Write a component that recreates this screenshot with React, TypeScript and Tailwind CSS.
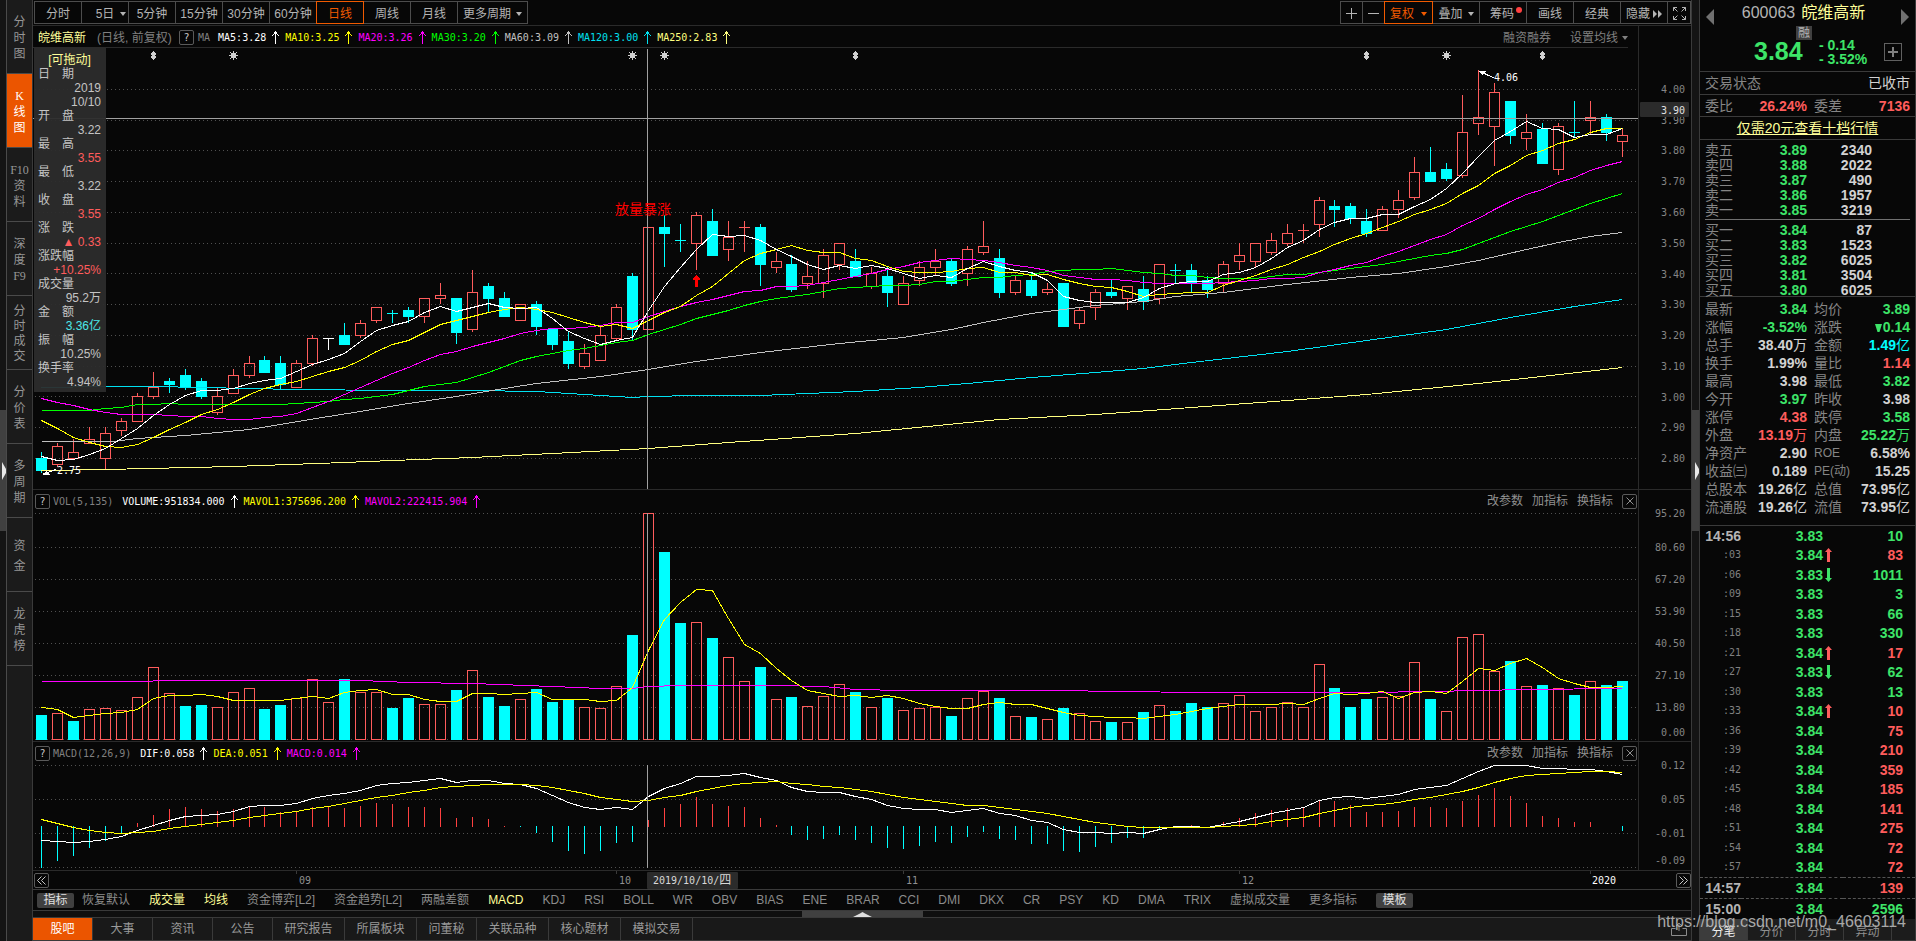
import React, { useEffect, useRef, useState } from "react";

/* ------------------------------------------------------------------ data */

type Kind = "up" | "down" | "flat";
/* [high, body top, body bottom, low, kind] */
type Candle = [number, number, number, number, Kind];

const CANDLES: Candle[] = [
  [2.82, 2.8, 2.76, 2.75, "down"],
  [2.85, 2.84, 2.78, 2.77, "up"],
  [2.86, 2.82, 2.8, 2.8, "up"],
  [2.9, 2.86, 2.85, 2.85, "up"],
  [2.9, 2.88, 2.8, 2.76, "up"],
  [2.93, 2.92, 2.89, 2.87, "up"],
  [3.01, 3.0, 2.92, 2.92, "up"],
  [3.08, 3.03, 3.0, 2.99, "up"],
  [3.06, 3.05, 3.04, 3.01, "down"],
  [3.09, 3.07, 3.03, 3.02, "down"],
  [3.06, 3.05, 3.0, 2.99, "down"],
  [3.03, 3.0, 2.95, 2.94, "up"],
  [3.09, 3.07, 3.01, 3.01, "up"],
  [3.13, 3.11, 3.07, 3.06, "up"],
  [3.13, 3.12, 3.08, 3.08, "down"],
  [3.13, 3.11, 3.04, 3.02, "down"],
  [3.12, 3.11, 3.03, 3.03, "up"],
  [3.2, 3.19, 3.11, 3.1, "up"],
  [3.19, 3.19, 3.19, 3.15, "flat"],
  [3.24, 3.2, 3.17, 3.17, "down"],
  [3.25, 3.24, 3.2, 3.19, "up"],
  [3.29, 3.29, 3.25, 3.24, "up"],
  [3.28, 3.27, 3.27, 3.24, "down"],
  [3.29, 3.28, 3.26, 3.24, "down"],
  [3.32, 3.32, 3.26, 3.24, "up"],
  [3.37, 3.33, 3.32, 3.3, "up"],
  [3.32, 3.32, 3.21, 3.17, "down"],
  [3.41, 3.34, 3.22, 3.21, "up"],
  [3.37, 3.36, 3.32, 3.27, "down"],
  [3.34, 3.32, 3.26, 3.26, "down"],
  [3.3, 3.3, 3.25, 3.25, "up"],
  [3.31, 3.3, 3.23, 3.2, "down"],
  [3.22, 3.22, 3.17, 3.15, "down"],
  [3.21, 3.18, 3.11, 3.09, "down"],
  [3.17, 3.14, 3.1, 3.09, "up"],
  [3.23, 3.2, 3.12, 3.12, "up"],
  [3.3, 3.29, 3.19, 3.18, "up"],
  [3.4, 3.39, 3.22, 3.18, "down"],
  [3.55, 3.55, 3.22, 3.22, "up"],
  [3.59, 3.55, 3.53, 3.42, "down"],
  [3.56, 3.51, 3.51, 3.47, "down"],
  [3.6, 3.59, 3.5, 3.41, "up"],
  [3.61, 3.57, 3.46, 3.46, "down"],
  [3.57, 3.52, 3.48, 3.44, "up"],
  [3.57, 3.55, 3.55, 3.47, "up"],
  [3.56, 3.55, 3.43, 3.36, "down"],
  [3.47, 3.44, 3.42, 3.4, "up"],
  [3.46, 3.43, 3.35, 3.34, "down"],
  [3.44, 3.39, 3.37, 3.35, "up"],
  [3.48, 3.46, 3.37, 3.32, "up"],
  [3.5, 3.5, 3.43, 3.41, "up"],
  [3.48, 3.44, 3.39, 3.39, "down"],
  [3.42, 3.4, 3.36, 3.35, "up"],
  [3.42, 3.39, 3.34, 3.29, "down"],
  [3.39, 3.37, 3.3, 3.3, "up"],
  [3.44, 3.42, 3.38, 3.36, "up"],
  [3.48, 3.44, 3.42, 3.39, "up"],
  [3.45, 3.44, 3.37, 3.36, "down"],
  [3.49, 3.48, 3.4, 3.36, "up"],
  [3.57, 3.49, 3.47, 3.46, "up"],
  [3.48, 3.45, 3.34, 3.32, "down"],
  [3.39, 3.38, 3.34, 3.33, "up"],
  [3.4, 3.38, 3.33, 3.32, "down"],
  [3.37, 3.35, 3.34, 3.33, "up"],
  [3.37, 3.37, 3.23, 3.23, "down"],
  [3.29, 3.28, 3.24, 3.22, "up"],
  [3.35, 3.34, 3.29, 3.25, "up"],
  [3.38, 3.34, 3.33, 3.32, "down"],
  [3.36, 3.36, 3.32, 3.28, "up"],
  [3.39, 3.35, 3.31, 3.28, "down"],
  [3.43, 3.43, 3.32, 3.3, "up"],
  [3.43, 3.41, 3.41, 3.37, "down"],
  [3.43, 3.41, 3.37, 3.34, "down"],
  [3.39, 3.38, 3.35, 3.32, "down"],
  [3.44, 3.43, 3.37, 3.34, "up"],
  [3.5, 3.46, 3.44, 3.41, "up"],
  [3.5, 3.5, 3.44, 3.42, "up"],
  [3.53, 3.51, 3.47, 3.46, "up"],
  [3.56, 3.53, 3.5, 3.49, "up"],
  [3.56, 3.54, 3.54, 3.5, "up"],
  [3.65, 3.64, 3.56, 3.52, "up"],
  [3.64, 3.62, 3.61, 3.55, "down"],
  [3.63, 3.62, 3.58, 3.56, "down"],
  [3.61, 3.57, 3.53, 3.52, "down"],
  [3.62, 3.61, 3.54, 3.54, "up"],
  [3.67, 3.64, 3.61, 3.58, "up"],
  [3.78, 3.73, 3.65, 3.64, "up"],
  [3.81, 3.73, 3.7, 3.7, "down"],
  [3.76, 3.74, 3.71, 3.7, "down"],
  [3.98, 3.86, 3.72, 3.71, "up"],
  [4.06, 3.91, 3.89, 3.85, "up"],
  [4.02, 3.99, 3.88, 3.75, "up"],
  [3.96, 3.96, 3.85, 3.82, "down"],
  [3.92, 3.86, 3.84, 3.8, "up"],
  [3.89, 3.87, 3.76, 3.76, "down"],
  [3.89, 3.88, 3.74, 3.72, "up"],
  [3.96, 3.86, 3.86, 3.84, "down"],
  [3.96, 3.91, 3.9, 3.85, "up"],
  [3.92, 3.91, 3.86, 3.83, "down"],
  [3.87, 3.85, 3.83, 3.78, "up"],
];

const VOLUMES = [
  9.9, 11, 7.4, 12.6, 13.1, 12.4, 17.7, 30.4, 19.5, 13.7, 14.5, 13.5, 19.9, 21.5, 12.8, 14.5, 17.3, 25.3, 15.7, 25.3,
  19.9, 19.9, 13.2, 17.4, 14.8, 14.8, 20.5, 29.1, 17.7, 13.7, 16.9, 21.2, 15.4, 16.6, 13.6, 13.2, 22.5, 43.7, 95.2, 78.7,
  48.7, 49.4, 42.4, 34.7, 24.6, 30.2, 17, 17.6, 14, 18.3, 23.3, 19.7, 13.6, 17.1, 12.4, 13.2, 13.6, 9.6, 17.4, 20.4,
  17.1, 9.8, 9.1, 8.6, 12.9, 11.1, 7.7, 7, 7.3, 11.2, 14.5, 11.7, 15, 13.3, 15.3, 18.7, 11.9, 13.6, 15.7, 13.6,
  31.7, 21.3, 13.3, 16.7, 17.8, 18.3, 32.6, 16.7, 11.9, 43.1, 44.4, 28.8, 32.7, 22.5, 22.6, 21.6, 18.4, 24.6, 22.6, 24.3,
];

const CLOSES = CANDLES.map(([, top, bottom, , kind]) => (kind === "down" ? bottom : top));

type Point = [number, number];

/* Moving average; `seed` holds the first n-1 values, whose window starts before the data. */
function average(values: number[], n: number, seed: number[]): Point[] {
  return values.map((_, i) => {
    if (i < n - 1) return [i, seed[i]] as Point;
    let sum = 0;
    for (let j = i - n + 1; j <= i; j++) sum += values[j];
    return [i, sum / n] as Point;
  });
}

const MA5 = average(CLOSES, 5, [2.807, 2.792, 2.798, 2.813]);
const MA10 = average(CLOSES, 10, [2.924, 2.896, 2.868, 2.851, 2.838, 2.837, 2.846, 2.869, 2.895]);
const MA20 = average(
  CLOSES,
  20,
  [2.995, 2.982, 2.972, 2.96, 2.95, 2.943, 2.943, 2.943, 2.94, 2.937, 2.935, 2.929, 2.927, 2.928, 2.932, 2.937, 2.946, 2.966, 2.985],
);
const MA30 = average(
  CLOSES,
  30,
  [
    2.956, 2.956, 2.956, 2.956, 2.963, 2.967, 2.975, 2.976, 2.979, 2.976, 2.976, 2.976, 2.976, 2.976, 2.976, 2.976, 2.979,
    2.982, 2.986, 2.991, 2.995, 3.0, 3.008, 3.021, 3.035, 3.041, 3.047, 3.063, 3.079,
  ],
);
const MA60: Point[] = [
  [0, 2.855], [4.5, 2.855], [6, 2.866], [9, 2.876], [13, 2.895], [18, 2.935], [20, 2.952], [23, 2.977], [26, 3.0],
  [29, 3.028], [31, 3.043], [35, 3.067], [38, 3.089], [41, 3.114], [45, 3.143], [50, 3.173], [54, 3.193], [57, 3.218],
  [59, 3.242], [62, 3.272], [64, 3.285], [66, 3.296], [69, 3.311], [71, 3.327], [74, 3.34], [78, 3.366], [82, 3.389],
  [85, 3.402], [88, 3.425], [90, 3.444], [93, 3.48], [95, 3.502], [97, 3.522], [99, 3.535],
];
const MA120: Point[] = [
  [0, 3.029], [4, 3.034], [7, 3.034], [10, 3.031], [13, 3.028], [16, 3.025], [22, 3.021], [27, 3.02], [31, 3.017],
  [33, 3.01], [37, 2.998], [38, 3.002], [41, 3.004], [45, 3.006], [48, 3.01], [51, 3.018], [55, 3.03], [58, 3.044],
  [62, 3.062], [66, 3.08], [69, 3.093], [72, 3.111], [78, 3.148], [83, 3.184], [88, 3.22], [92, 3.257], [96, 3.293],
  [99, 3.317],
];
const MA250: Point[] = [
  [0, 2.76], [4, 2.764], [12, 2.774], [19, 2.786], [22, 2.794], [27, 2.804], [32, 2.816], [38, 2.832], [43, 2.853],
  [51, 2.882], [60, 2.925], [66, 2.944], [72, 2.966], [78, 2.989], [83, 3.008], [90, 3.043], [99, 3.096],
];

const MAVOL1 = average(VOLUMES, 5, [13.5, 12.6, 9.4, 9.9]);
const MAVOL2: Point[] = [
  [0, 24.6], [6, 24.6], [8, 24.9], [20, 24.9], [23, 24.1], [27, 23.7], [32, 22.4], [35, 21.6], [37, 21.6], [38, 22.5],
  [40, 22.9], [46, 22.9], [49, 22.3], [51, 21.2], [54, 20.8], [64, 20.8], [67, 20.4], [73, 19.8], [79, 19.7], [83, 19.9],
  [87, 20.2], [90, 20.8], [93, 21.2], [99, 21.6],
];

/* MACD(12, 26, 9) carried forward from the averages on the first day shown. */
const MACD = (() => {
  let fast = 2.88;
  let slow = 2.9066;
  let signal = 0.0146;
  return CLOSES.map((close, i) => {
    if (i > 0) {
      fast += (2 / 13) * (close - fast);
      slow += (2 / 27) * (close - slow);
      signal += (2 / 10) * (fast - slow - signal);
    }
    const dif = fast - slow;
    return { dif, dea: signal, bar: 2 * (dif - signal) };
  });
})();

/* ----------------------------------------------------------------- scale */

const BASE_WIDTH = 1605;
const priceY = (p: number) => Math.floor(41.4 + (4 - p) * 307.5 + 0.001);
const volumeY = (v: number) => Math.round(227 - v * 2.374);
/* lines that leave the scale run along its top edge */
const macdY = (v: number) => Math.max(1, Math.round(62.5 - v * 511));

function useWidth() {
  const ref = useRef<HTMLDivElement>(null);
  const [width, setWidth] = useState(BASE_WIDTH);
  useEffect(() => {
    const el = ref.current;
    if (!el) return;
    const observer = new ResizeObserver(() => setWidth(el.clientWidth));
    observer.observe(el);
    return () => observer.disconnect();
  }, []);
  return { ref, width };
}

const RED = "#ff5c5c";
const CYAN = "#00ffff";
const MONO = "font-['DejaVu_Sans_Mono','Noto_Sans_CJK_SC',monospace] text-[10px]";

/* ---------------------------------------------------------------- pieces */

function UpArrow() {
  return (
    <svg width="7" height="13" viewBox="0 0 7 13" className="mx-1.5 shrink-0" fill="currentColor" shapeRendering="crispEdges">
      <path d="M3 0h1v13h-1zM2 1h3v2h-3zM1 3h1v1h-1zM5 3h1v1h-1zM0 4h1v1h-1zM6 4h1v1h-1z" />
    </svg>
  );
}

function Caret() {
  return (
    <svg width="6" height="4" viewBox="0 0 6 4" fill="currentColor" className="shrink-0">
      <path d="M0 0h6L3 4z" />
    </svg>
  );
}

function HelpBox() {
  return (
    <button className={`${MONO} flex h-[15px] w-[15px] items-center justify-center rounded-[2px] border border-[#5a5a5a] text-[#c8c8c8]`}>
      ?
    </button>
  );
}

function Line({ points, x, y, color }: { points: Point[]; x: (i: number) => number; y: (v: number) => number; color: string }) {
  return <polyline fill="none" stroke={color} points={points.map(([i, v]) => `${x(i) + 0.5},${y(v) + 0.5}`).join(" ")} />;
}

function GridLines({ ys, width }: { ys: number[]; width: number }) {
  return (
    <g stroke="#505050" strokeDasharray="1 3">
      {ys.map((y) => (
        <line key={y} x1="2" x2={width} y1={y + 0.5} y2={y + 0.5} />
      ))}
    </g>
  );
}

function Star({ x }: { x: number }) {
  return (
    <g transform={`translate(${x - 4} 3)`} fill="#d0d0d0">
      <path d="M2 2h5v5h-5zM4 0h1v9h-1zM0 4h9v1h-9zM1 1h1v1h-1zM7 1h1v1h-1zM1 7h1v1h-1zM7 7h1v1h-1z" />
    </g>
  );
}

function UpDown({ x }: { x: number }) {
  return (
    <g transform={`translate(${x - 2} 3)`} fill="#d0d0d0">
      <path d="M2 0h1v1h1v1h1v2h-1v1h1v2h-1v1h-1v1h-1v-1h-1v-1h-1v-2h1v-1h-1v-2h1v-1h1z" />
    </g>
  );
}

type Scale = { x: (i: number) => number; width: number; cross: number };

function PriceChart({ x, width, cross }: Scale) {
  const ticks = [4, 3.9, 3.8, 3.7, 3.6, 3.5, 3.4, 3.3, 3.2, 3.1, 3, 2.9, 2.8];
  return (
    <svg width={width} height="441" shapeRendering="crispEdges" className="block">
      <GridLines ys={ticks.map(priceY)} width={width} />
      {CANDLES.map(([high, top, bottom, low, kind], i) => {
        const cx = x(i);
        const [yh, yt, yb, yl] = [high, top, bottom, low].map(priceY);
        const color = kind === "up" ? RED : kind === "down" ? CYAN : "#ffffff";
        return (
          <g key={i}>
            {yh < yt && <rect x={cx} y={yh} width="1" height={yt - yh} fill={color} />}
            {yl > yb && <rect x={cx} y={yb} width="1" height={yl - yb} fill={color} />}
            {yt === yb ? (
              <rect x={cx - 5} y={yt} width="11" height="1" fill={color} />
            ) : kind === "up" ? (
              <rect x={cx - 4.5} y={yt + 0.5} width="10" height={yb - yt} fill="none" stroke={color} />
            ) : (
              <rect x={cx - 5} y={yt} width="11" height={yb - yt + 1} fill={color} />
            )}
          </g>
        );
      })}
      <Line points={MA250} x={x} y={priceY} color="#ffff80" />
      <Line points={MA120} x={x} y={priceY} color="#00e0f0" />
      <Line points={MA60} x={x} y={priceY} color="#c0c0c0" />
      <Line points={MA30} x={x} y={priceY} color="#00ff00" />
      <Line points={MA20} x={x} y={priceY} color="#ff00ff" />
      <Line points={MA10} x={x} y={priceY} color="#ffff00" />
      <Line points={MA5} x={x} y={priceY} color="#ffffff" />
      {[7, 51, 83, 94].map((i) => (
        <UpDown key={i} x={x(i)} />
      ))}
      {[12, 37, 39, 88].map((i) => (
        <Star key={i} x={x(i)} />
      ))}
      <rect x="0" y="70" width={width} height="1" fill="#a0a0a0" />
      <rect x={cross} y="1" width="1" height="440" fill="#a0a0a0" />
      <text x={x(37) - 17} y="166" fill="#ff0000" className="font-['Noto_Sans_CJK_SC',sans-serif] text-[14px]">
        放量暴涨
      </text>
      <path d={`M${x(41) - 1} 239v-7h-2v-2h1v-1h1v-1h1v-1h1v1h1v1h1v1h1v2h-2v7z`} fill="#ff0000" />
      <g stroke="#ffffff" fill="#ffffff">
        <path d={`M${x(90) + 2} 23.5L${x(90) + 16} 30`} />
        <path d={`M${x(90) + 1} 23h7l-4 4z`} stroke="none" />
        <path d={`M${x(0) + 2} 426L${x(0) + 15} 421.5`} />
        <path d={`M${x(0) + 1} 427h8l-4 -4z`} stroke="none" />
      </g>
      <text x={x(90) + 16} y="33" fill="#ffffff" className={MONO}>
        4.06
      </text>
      <text x={x(0) + 16} y="426" fill="#ffffff" className={MONO}>
        2.75
      </text>
    </svg>
  );
}

function VolumeChart({ x, width, cross }: Scale) {
  return (
    <svg width={width} height="229" shapeRendering="crispEdges" className="block">
      <GridLines ys={[1, 35, 67, 99, 131, 163, 195, 227]} width={width} />
      {VOLUMES.map((v, i) => {
        const rising = i > 0 && CLOSES[i] >= CLOSES[i - 1];
        const y = volumeY(v);
        return rising ? (
          <rect key={i} x={x(i) - 4.5} y={y + 0.5} width="10" height={227 - y} fill="none" stroke={RED} />
        ) : (
          <rect key={i} x={x(i) - 5} y={y} width="11" height={228 - y} fill={CYAN} />
        );
      })}
      <Line points={MAVOL2} x={x} y={volumeY} color="#ff00ff" />
      <Line points={MAVOL1} x={x} y={volumeY} color="#ffff00" />
      <rect x={cross} y="1" width="1" height="227" fill="#a0a0a0" />
    </svg>
  );
}

function MacdChart({ x, width, cross }: Scale) {
  return (
    <svg width={width} height="106" shapeRendering="crispEdges" className="block">
      <GridLines ys={[1, 35, 69, 103]} width={width} />
      {MACD.map(({ bar }, i) => {
        const h = Math.round(Math.abs(bar) * 511);
        if (h < 1) return null;
        return bar > 0 ? (
          <rect key={i} x={x(i)} y={63 - h} width="1" height={h} fill="#ff4040" />
        ) : (
          <rect key={i} x={x(i)} y="62" width="1" height={h} fill={CYAN} />
        );
      })}
      <Line points={MACD.map((m, i) => [i, m.dif])} x={x} y={macdY} color="#ffffff" />
      <Line points={MACD.map((m, i) => [i, m.dea])} x={x} y={macdY} color="#ffff00" />
      <rect x={cross} y="1" width="1" height="103" fill="#a0a0a0" />
    </svg>
  );
}

function Axis({ height, labels, highlight }: { height: number; labels: [string, number][]; highlight?: [string, number] }) {
  return (
    <div className="w-[53px] shrink-0 border-l border-[#2a2a2a]">
      <svg width="52" height={height} className={`${MONO} block`} fill="#858585" textAnchor="end">
        {labels.map(([text, y]) => (
          <text key={text} x="46" y={y + 4}>
            {text}
          </text>
        ))}
        {highlight && (
          <g>
            <rect x="1" y={highlight[1] - 8} width="49" height="15" rx="1" fill="#2b2b2b" />
            <text x="46" y={highlight[1] + 4} fill="#e0e0e0">
              {highlight[0]}
            </text>
          </g>
        )}
      </svg>
    </div>
  );
}

function Reading({ text, className }: { text: string; className: string }) {
  return (
    <span className={`flex items-center ${className}`}>
      {text}
      <UpArrow />
    </span>
  );
}

function PanelHeader({ name, readings }: { name: string; readings: [string, string][] }) {
  return (
    <div className="flex h-[22px] items-center pr-px pl-0.5">
      <HelpBox />
      <div className={`${MONO} ml-[3px] flex items-center whitespace-nowrap`}>
        <span className="mr-[9px] text-[#808080]">{name}</span>
        {readings.map(([text, color]) => (
          <Reading key={text} text={text} className={color} />
        ))}
      </div>
      <div className="ml-auto flex items-center gap-[9px] text-xs text-[#909090]">
        <button>改参数</button>
        <button>加指标</button>
        <button>换指标</button>
        <button aria-label="关闭" className="flex h-[15px] w-[15px] items-center justify-center rounded-[2px] border border-[#5a5a5a]">
          <svg width="8" height="8" viewBox="0 0 8 8" stroke="currentColor">
            <path d="M0.5 0.5l7 7M7.5 0.5l-7 7" />
          </svg>
        </button>
      </div>
    </div>
  );
}

/* --------------------------------------------------------------- sidebar */

const NAV: { text: string[]; gap: string }[] = [
  { text: ["分", "时", "图"], gap: "leading-4" },
  { text: ["K", "线", "图"], gap: "leading-4" },
  { text: ["F10", "资", "料"], gap: "leading-4" },
  { text: ["深", "度", "F9"], gap: "leading-4" },
  { text: ["分", "时", "成", "交"], gap: "leading-[15px]" },
  { text: ["分", "价", "表"], gap: "leading-4" },
  { text: ["多", "周", "期"], gap: "leading-4" },
  { text: ["资", "金"], gap: "leading-5" },
  { text: ["龙", "虎", "榜"], gap: "leading-4" },
];

function SideNav() {
  return (
    <nav className="w-[26px] shrink-0 border-l border-[#4a4a4a] bg-[#1b1b1b]">
      {NAV.map(({ text, gap }, i) => (
        <button
          key={text.join("")}
          className={`flex h-[74px] w-full flex-col items-center justify-center border-b border-[#4a4a4a] pt-0.5 text-xs ${gap} ${
            i === 1 ? "bg-[#eb5500] text-white" : "text-[#969696]"
          }`}
        >
          {text.map((line) => (
            <span key={line} className={/[A-Z]/.test(line) ? "font-['Liberation_Serif',serif]" : ""}>
              {line}
            </span>
          ))}
        </button>
      ))}
    </nav>
  );
}

function Splitter({ className }: { className: string }) {
  return (
    <div className={`shrink-0 bg-[#141414] pt-[410px] ${className}`}>
      <button aria-label="展开" className="flex h-[121px] w-full items-center justify-end bg-[#404040]">
        <svg width="4" height="18" viewBox="0 0 4 18" fill="#e8e8e8">
          <path d="M0 0L4 7v4L0 18z" />
        </svg>
      </button>
    </div>
  );
}

/* --------------------------------------------------------------- toolbar */

const PERIODS = ["分时", "5日", "5分钟", "15分钟", "30分钟", "60分钟", "日线", "周线", "月线"];

const TOOL = "-ml-px flex h-[23px] items-center justify-center border pt-0.5 whitespace-nowrap";
const IDLE = "border-[#4c4c4c] text-[#b4b4b4]";
const ACTIVE = "relative z-10 border-[#f05a00] text-[#f05a00]";

function Toolbar() {
  return (
    <div className="flex h-[26px] items-start justify-between border-b border-[#2a2a2a] pt-px text-xs">
      <div className="flex pl-0.5">
        {PERIODS.map((p) => (
          <button key={p} className={`${TOOL} w-12 ${p === "日线" ? ACTIVE : IDLE} ${p === "5日" ? "gap-1.5 pl-3" : ""}`}>
            {p}
            {p === "5日" && <Caret />}
          </button>
        ))}
        <button className={`${TOOL} ${IDLE} w-[71px] gap-[5px]`}>
          更多周期
          <Caret />
        </button>
      </div>
      <div className="flex">
        <button aria-label="放大" className={`${TOOL} ${IDLE} w-[23px]`}>
          <svg width="11" height="11" stroke="currentColor" shapeRendering="crispEdges">
            <path d="M0 5.5h11M5.5 0v11" />
          </svg>
        </button>
        <button aria-label="缩小" className={`${TOOL} ${IDLE} w-[23px]`}>
          <svg width="11" height="11" stroke="currentColor" shapeRendering="crispEdges">
            <path d="M0 5.5h11" />
          </svg>
        </button>
        <button className={`${TOOL} ${ACTIVE} w-[49px] gap-[7px]`}>
          复权
          <Caret />
        </button>
        <button className={`${TOOL} ${IDLE} w-12 gap-[5px]`}>
          叠加
          <Caret />
        </button>
        <button className={`${TOOL} ${IDLE} w-12 gap-[2px] pl-1.5`}>
          筹码
          <span className="mb-2 h-1.5 w-1.5 rounded-full bg-[#ff4040]" />
        </button>
        <button className={`${TOOL} ${IDLE} w-12`}>画线</button>
        <button className={`${TOOL} ${IDLE} w-12`}>经典</button>
        <button className={`${TOOL} ${IDLE} w-12 gap-[3px]`}>
          隐藏
          <svg width="9" height="8" viewBox="0 0 9 8" fill="currentColor">
            <path d="M0 0L4 4L0 8zM5 0L9 4L5 8z" />
          </svg>
        </button>
        <button aria-label="全屏" className={`${TOOL} ${IDLE} w-6`}>
          <svg width="13" height="13" viewBox="0 0 13 13" fill="none" stroke="currentColor">
            <path d="M0.5 4V0.5H4M0.5 0.5L4.5 4.5M9 0.5h3.5V4M12.5 0.5l-4 4M0.5 9v3.5H4M0.5 12.5l4-4M9 12.5h3.5V9M12.5 12.5l-4-4" />
          </svg>
        </button>
      </div>
    </div>
  );
}

/* ------------------------------------------------------------ info panel */

const DAY_INFO: { label: string; values: string[]; color: string }[] = [
  { label: "日　期", values: ["2019", "10/10"], color: "text-[#c4c4c4]" },
  { label: "开　盘", values: ["3.22"], color: "text-[#c4c4c4]" },
  { label: "最　高", values: ["3.55"], color: "text-[#ff5c5c]" },
  { label: "最　低", values: ["3.22"], color: "text-[#c4c4c4]" },
  { label: "收　盘", values: ["3.55"], color: "text-[#ff5c5c]" },
  { label: "涨　跌", values: ["▲ 0.33"], color: "text-[#ff5c5c]" },
  { label: "涨跌幅", values: ["+10.25%"], color: "text-[#ff5c5c]" },
  { label: "成交量", values: ["95.2万"], color: "text-[#c4c4c4]" },
  { label: "金　额", values: ["3.36亿"], color: "text-[#4ce8e8]" },
  { label: "振　幅", values: ["10.25%"], color: "text-[#c4c4c4]" },
  { label: "换手率", values: ["4.94%"], color: "text-[#c4c4c4]" },
];

function DayInfo() {
  return (
    <dl className="absolute top-0 left-px h-[344px] w-[72px] bg-[#2c2c2c]/95 pt-[5px] pr-[5px] pl-1 text-xs leading-[14px]">
      <dt className="text-center text-[#ffff99]">[可拖动]</dt>
      {DAY_INFO.map(({ label, values, color }) => (
        <React.Fragment key={label}>
          <dt className="text-[#c4c4c4]">{label}</dt>
          {values.map((v) => (
            <dd key={v} className={`text-right whitespace-nowrap ${color}`}>
              {v}
            </dd>
          ))}
        </React.Fragment>
      ))}
    </dl>
  );
}

/* ------------------------------------------------------------ chart area */

const INDICATORS = [
  "恢复默认", "成交量", "均线", "资金博弈[L2]", "资金趋势[L2]", "两融差额", "MACD", "KDJ", "RSI", "BOLL", "WR", "OBV", "BIAS",
  "ENE", "BRAR", "CCI", "DMI", "DKX", "CR", "PSY", "KD", "DMA", "TRIX", "虚拟成交量", "更多指标",
];
const SELECTED = ["成交量", "均线", "MACD"];

const BOTTOM_TABS: [string, string][] = [
  ["股吧", "w-[60px]"], ["大事", "w-[60px]"], ["资讯", "w-[60px]"], ["公告", "w-[60px]"], ["研究报告", "w-[72px]"],
  ["所属板块", "w-[72px]"], ["问董秘", "w-[60px]"], ["关联品种", "w-[72px]"], ["核心题材", "w-[72px]"], ["模拟交易", "w-[72px]"],
];

const MONTHS: [string, number][] = [["09", 16], ["10", 36], ["11", 54], ["12", 75]];

function ChartArea() {
  const { ref, width } = useWidth();
  const step = (width / BASE_WIDTH) * 15.97;
  const x = (i: number) => Math.floor(8.4 + step * i);
  const cross = x(38) - 1;
  const scale = { x, width, cross };

  return (
    <main className="flex min-w-0 flex-1 flex-col border-x border-[#3a3a3a]">
      <Toolbar />

      <section className="flex h-[464px] border-b border-[#2a2a2a]">
        <div ref={ref} className="min-w-0 flex-1 overflow-hidden">
          <div className="mr-[10px] flex h-[22px] items-center border-b border-[#2a2a2a] pt-0.5 pl-[5px] text-xs whitespace-nowrap">
            <h1 className="text-[#ffff99]">皖维高新</h1>
            <span className="ml-[11px] w-[82px] text-[#808080]">(日线, 前复权)</span>
            <HelpBox />
            <div className={`${MONO} ml-1 flex items-center`}>
              <span className="mr-2 text-[#808080]">MA</span>
              <Reading text="MA5:3.28" className="text-white" />
              <Reading text="MA10:3.25" className="text-[#ffff00]" />
              <Reading text="MA20:3.26" className="text-[#ff00ff]" />
              <Reading text="MA30:3.20" className="text-[#00ff00]" />
              <Reading text="MA60:3.09" className="text-[#c0c0c0]" />
              <Reading text="MA120:3.00" className="text-[#00e0f0]" />
              <Reading text="MA250:2.83" className="text-[#ffff80]" />
            </div>
            <div className="ml-auto flex items-center gap-[19px] text-[#808080]">
              <button>融资融券</button>
              <button className="flex items-center gap-1">
                设置均线
                <Caret />
              </button>
            </div>
          </div>
          <div className="relative">
            <PriceChart {...scale} />
            <DayInfo />
          </div>
        </div>
        <Axis
          height={463}
          labels={[
            ["4.00", 63], ["3.90", 94], ["3.80", 124], ["3.70", 155], ["3.60", 186], ["3.50", 217], ["3.40", 248],
            ["3.30", 278], ["3.20", 309], ["3.10", 340], ["3.00", 371], ["2.90", 401], ["2.80", 432],
          ]}
          highlight={["3.90", 84]}
        />
      </section>

      <section className="flex h-[252px] border-b border-[#2a2a2a]">
        <div className="min-w-0 flex-1 overflow-hidden">
          <PanelHeader
            name="VOL(5,135)"
            readings={[
              ["VOLUME:951834.000", "text-white"],
              ["MAVOL1:375696.200", "text-[#ffff00]"],
              ["MAVOL2:222415.904", "text-[#ff00ff]"],
            ]}
          />
          <VolumeChart {...scale} />
        </div>
        <Axis
          height={251}
          labels={[
            ["95.20", 23], ["80.60", 57], ["67.20", 89], ["53.90", 121], ["40.50", 153], ["27.10", 185], ["13.80", 217],
            ["0.00", 242],
          ]}
        />
      </section>

      <section className="flex h-[129px] border-b border-[#2a2a2a]">
        <div className="min-w-0 flex-1 overflow-hidden">
          <PanelHeader
            name="MACD(12,26,9)"
            readings={[
              ["DIF:0.058", "text-white"],
              ["DEA:0.051", "text-[#ffff00]"],
              ["MACD:0.014", "text-[#ff00ff]"],
            ]}
          />
          <MacdChart {...scale} />
        </div>
        <Axis height={128} labels={[["0.12", 23], ["0.05", 57], ["-0.01", 91], ["-0.09", 118]]} />
      </section>

      <div className="flex h-[19px] items-center border-b border-[#3a3a3a] pl-px">
        <button aria-label="向前" className="flex h-[15px] w-[15px] items-center justify-center rounded-[2px] border border-[#5a5a5a] text-[#c8c8c8]">
          <svg width="9" height="9" viewBox="0 0 9 9" fill="none" stroke="currentColor">
            <path d="M4.5 0.5l-4 4l4 4M8.5 0.5l-4 4l4 4" />
          </svg>
        </button>
        <svg height="18" className={`${MONO} min-w-0 flex-1`} fill="#909090">
          {MONTHS.map(([m, i]) => (
            <g key={m}>
              <rect x={x(i) - 16} y="0" width="1" height="3" fill="#3a3a3a" />
              <text x={x(i) - 13} y="13">
                {m}
              </text>
            </g>
          ))}
          <rect x={cross - 16} y="1" width="91" height="17" rx="1" fill="#2b2b2b" />
          <text x={cross - 10} y="13" fill="#d8d8d8">
            2019/10/10/<tspan className="text-[12px]">四</tspan>
          </text>
          <rect x={x(97) - 16} y="0" width="1" height="3" fill="#3a3a3a" />
          <text x={x(97) - 14} y="13" fill="#ffffff">
            2020
          </text>
        </svg>
        <button aria-label="向后" className="flex h-[15px] w-[15px] items-center justify-center rounded-[2px] border border-[#5a5a5a] text-[#c8c8c8]">
          <svg width="9" height="9" viewBox="0 0 9 9" fill="none" stroke="currentColor">
            <path d="M0.5 0.5l4 4l-4 4M4.5 0.5l4 4l-4 4" />
          </svg>
        </button>
      </div>

      <div className="flex h-[21px] items-center gap-[19px] border-b border-[#3a3a3a] pl-1 text-xs leading-none whitespace-nowrap text-[#8c8c8c]">
        <button className="-mr-[11px] h-[15px] w-[37px] rounded-[2px] bg-[#404040] text-[#e0e0e0]">指标</button>
        {INDICATORS.map((name) => (
          <button key={name} className={SELECTED.includes(name) ? "text-[#ffff99]" : ""}>
            {name}
          </button>
        ))}
        <button className="h-[15px] w-[37px] rounded-[2px] bg-[#404040] text-[#e0e0e0]">模板</button>
      </div>

      <div className="flex h-[7px] justify-center border-b border-[#3a3a3a] bg-[#0f0f0f]">
        <button aria-label="展开" className="flex w-[121px] items-end justify-center bg-[#404040]">
          <svg width="19" height="5" viewBox="0 0 19 5" fill="#e0e0e0" className="block">
            <path d="M0 5L7 1.5L9.5 0L12 1.5L19 5z" />
          </svg>
        </button>
      </div>

      <div className="flex h-[23px] items-center justify-between border-b border-[#3a3a3a] bg-[#191919] pr-1 text-xs text-[#9a9a9a]">
        <div className="flex h-full">
          {BOTTOM_TABS.map(([name, w], i) => (
            <button key={name} className={`${w} h-full border-r border-[#3a3a3a] ${i === 0 ? "bg-[#eb5500] text-white" : ""}`}>
              {name}
            </button>
          ))}
        </div>
        <button aria-label="弹出" className="text-[#8c8c8c]">
          <svg width="16" height="16" viewBox="0 0 16 16" fill="none" stroke="currentColor">
            <path d="M0.5 7.5h4M11.5 7.5h4v7h-15v-7M8 10V2M5 5l3-3l3 3" />
          </svg>
        </button>
      </div>
    </main>
  );
}

/* ------------------------------------------------------------ quote side */

const G = "text-[#3de468]";
const R = "text-[#ff5c5c]";
const W = "text-[#d2d2d2]";
const C = "text-[#00ffff]";

const ASKS: [string, string, string][] = [
  ["卖五", "3.89", "2340"], ["卖四", "3.88", "2022"], ["卖三", "3.87", "490"], ["卖二", "3.86", "1957"], ["卖一", "3.85", "3219"],
];
const BIDS: [string, string, string][] = [
  ["买一", "3.84", "87"], ["买二", "3.83", "1523"], ["买三", "3.82", "6025"], ["买四", "3.81", "3504"], ["买五", "3.80", "6025"],
];

type Stat = [string, string, string];
const STATS: [Stat, Stat][] = [
  [["最新", "3.84", G], ["均价", "3.89", G]],
  [["涨幅", "-3.52%", G], ["涨跌", "▼0.14", G]],
  [["总手", "38.40万", W], ["金额", "1.49亿", C]],
  [["换手", "1.99%", W], ["量比", "1.14", R]],
  [["最高", "3.98", W], ["最低", "3.82", G]],
  [["今开", "3.97", G], ["昨收", "3.98", W]],
  [["涨停", "4.38", R], ["跌停", "3.58", G]],
  [["外盘", "13.19万", R], ["内盘", "25.22万", G]],
  [["净资产", "2.90", W], ["ROE", "6.58%", W]],
  [["收益㈢", "0.189", W], ["PE(动)", "15.25", W]],
  [["总股本", "19.26亿", W], ["总值", "73.95亿", W]],
  [["流通股", "19.26亿", W], ["流值", "73.95亿", W]],
];

/* [time, price, direction, volume, colour of volume] */
const TRADES: [string, string, "" | "up" | "down", string, string][] = [
  ["14:56", "3.83", "", "10", G],
  [":03", "3.84", "up", "83", R],
  [":06", "3.83", "down", "1011", G],
  [":09", "3.83", "", "3", G],
  [":15", "3.83", "", "66", G],
  [":18", "3.83", "", "330", G],
  [":21", "3.84", "up", "17", R],
  [":27", "3.83", "down", "62", G],
  [":30", "3.83", "", "13", G],
  [":33", "3.84", "up", "10", R],
  [":36", "3.84", "", "75", R],
  [":39", "3.84", "", "210", R],
  [":42", "3.84", "", "359", R],
  [":45", "3.84", "", "185", R],
  [":48", "3.84", "", "141", R],
  [":51", "3.84", "", "275", R],
  [":54", "3.84", "", "72", R],
  [":57", "3.84", "", "72", R],
  ["14:57", "3.84", "", "139", R],
  ["15:00", "3.84", "", "2596", G],
];

function Figure({ value }: { value: string }) {
  const unit = /[万亿]$/.test(value) ? value.slice(-1) : "";
  const number = unit ? value.slice(0, -1) : value;
  const mark = number.startsWith("▼");
  return (
    <>
      {mark && (
        <svg width="7" height="8" viewBox="0 0 7 8" fill="currentColor" className="mr-px inline align-baseline">
          <path d="M0 0h7L4.500 8h-2z" />
        </svg>
      )}
      <span className="font-bold">{mark ? number.slice(1) : number}</span>
      {unit}
    </>
  );
}

function Book({ rows }: { rows: [string, string, string][] }) {
  return (
    <table className="w-full table-fixed leading-none">
      <tbody>
        {rows.map(([label, price, volume]) => (
          <tr key={label} className="h-[15px]">
            <th scope="row" className="w-[44px] p-0 text-left font-normal text-[#858585]">{label}</th>
            <td className={`w-[58px] p-0 text-right font-bold ${G}`}>{price}</td>
            <td className={`w-[65px] p-0 text-right font-bold ${W}`}>{volume}</td>
            <td className="p-0" />
          </tr>
        ))}
      </tbody>
    </table>
  );
}

function StatTable({ rows, rowClass }: { rows: [Stat, Stat][]; rowClass: string }) {
  return (
    <table className="w-full table-fixed leading-none whitespace-nowrap">
      <tbody>
        {rows.map(([a, b]) => (
          <tr key={a[0]} className={rowClass}>
            <th scope="row" className="w-[44px] p-0 text-left font-normal text-[#858585]">{a[0]}</th>
            <td className={`w-[58px] p-0 text-right ${a[2]}`}>
              <Figure value={a[1]} />
            </td>
            <th scope="row" className={`w-[49px] p-0 pl-[7px] text-left font-normal text-[#858585] ${/[A-Z]/.test(b[0]) ? "text-xs leading-none" : ""}`}>{b[0]}</th>
            <td className={`p-0 text-right ${b[2]}`}>
              <Figure value={b[1]} />
            </td>
          </tr>
        ))}
      </tbody>
    </table>
  );
}

function QuotePanel() {
  return (
    <aside className="flex w-[217px] shrink-0 flex-col border-x border-[#3a3a3a] text-sm">
      <header className="h-[72px] border-b border-[#3a3a3a] px-1.5">
        <div className="flex h-6 items-center justify-between">
          <button aria-label="上一只" className="mt-2.5">
            <svg width="8" height="16" viewBox="0 0 8 16" fill="#707070">
              <path d="M8 0v16L0 8z" />
            </svg>
          </button>
          <h2 className="mt-0.5 -ml-2 flex gap-1.5 text-base leading-6">
            <span className="text-[#b4b4b4]">600063</span>
            <span className="text-[#ffff99]">皖维高新</span>
          </h2>
          <button aria-label="下一只" className="mt-2.5">
            <svg width="8" height="16" viewBox="0 0 8 16" fill="#707070">
              <path d="M0 0v16L8 8z" />
            </svg>
          </button>
        </div>
        <div className="relative flex h-[47px] items-center pt-2 pl-12">
          <span className="absolute top-0.5 left-[90px] h-[14px] w-4 bg-[#404040] text-center text-xs leading-[14px] text-[#b4b4b4]">融</span>
          <span className={`w-[49px] text-[25px] leading-none font-bold ${G}`}>3.84</span>
          <span className={`ml-4 w-[50px] leading-[14px] font-bold whitespace-nowrap ${G}`}>
            - 0.14
            <br />- 3.52%
          </span>
          <button aria-label="加自选" className="ml-auto mr-[7px] flex h-[18px] w-[18px] items-center justify-center border border-[#606060] text-[#808080]">
            <svg width="10" height="10" stroke="currentColor" strokeWidth="2" shapeRendering="crispEdges">
              <path d="M0 5h10M5 0v10" />
            </svg>
          </button>
        </div>
      </header>

      <div className="flex h-[23px] items-center justify-between border-b border-[#3a3a3a] px-[5px]">
        <span className="text-[#858585]">交易状态</span>
        <span className={W}>已收市</span>
      </div>
      <div className="h-[22px] border-b border-[#3a3a3a] px-[5px]">
        <StatTable rows={[[["委比", "26.24%", R], ["委差", "7136", R]]]} rowClass="h-[21px]" />
      </div>
      <div className="h-[23px] border-b border-[#3a3a3a] text-center leading-[22px]">
        <a href="#level2" className="text-[#ffff99] underline">
          仅需20元查看十档行情
        </a>
      </div>
      <div className="h-[157px] border-b border-[#3a3a3a] px-[5px] pt-0.5">
        <Book rows={ASKS} />
        <div className="my-0.5 border-t border-[#707070]" />
        <Book rows={BIDS} />
      </div>
      <div className="h-[229px] border-b border-[#3a3a3a] px-[5px] pt-[3px]">
        <StatTable rows={STATS} rowClass="h-[18px]" />
      </div>

      <div className="flex-1 overflow-hidden">
        <table className="h-[393px] w-full table-fixed border-collapse leading-none">
          <tbody>
            {TRADES.map(([time, price, dir, volume, color]) => (
              <tr key={time} className={time === "14:57" || time === "15:00" ? "border-t border-dashed border-[#555555]" : ""}>
                <td className={`w-[41px] p-0 text-right ${time.length > 3 ? "font-bold text-[#b4b4b4]" : `${MONO} text-[#808080]`}`}>{time}</td>
                <td className={`w-[82px] p-0 text-right font-bold ${G}`}>{price}</td>
                <td className="w-5 p-0 pl-0.5">
                  {dir && (
                    <svg width="7" height="14" viewBox="0 0 7 14" className={`block ${dir === "up" ? "text-[#ff5c5c]" : "rotate-180 text-[#3de468]"}`} fill="currentColor">
                      <path d="M3.5 0L7 4H5v10H2V4H0z" />
                    </svg>
                  )}
                </td>
                <td className={`p-0 pr-3 text-right font-bold ${color}`}>{volume}</td>
              </tr>
            ))}
          </tbody>
        </table>
      </div>
      <div className="flex h-[22px] border-b border-[#3a3a3a] bg-[#1c1c1c] text-xs text-[#909090]">
        {["分笔", "分价", "分时", "异动"].map((t, i) => (
          <button key={t} className={`w-12 border-r border-[#3a3a3a] pt-1 ${i === 0 ? "bg-[#3c3c3c] text-[#f0f0f0]" : ""}`}>
            {t}
          </button>
        ))}
      </div>
    </aside>
  );
}

export default function App() {
  return (
    <div className="relative flex min-h-screen bg-[#070707] font-['Liberation_Sans','Noto_Sans_CJK_SC',sans-serif] text-[#c0c0c0]">
      <Splitter className="w-1.5" />
      <SideNav />
      <ChartArea />
      <Splitter className="w-[7px]" />
      <QuotePanel />
      <div className="pointer-events-none absolute right-[10px] bottom-[7px] text-base text-[#b8b8b8] opacity-90">https://blog.csdn.net/m0_46603114</div>
    </div>
  );
}
